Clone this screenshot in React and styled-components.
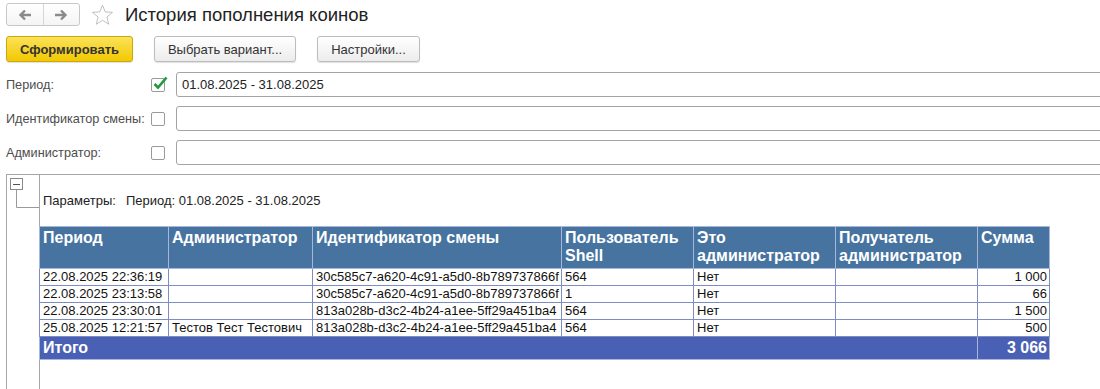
import React from "react";
import styled, { createGlobalStyle } from "styled-components";

const GlobalStyle = createGlobalStyle`
  html, body {
    margin: 0;
    padding: 0;
    background: #fff;
    overflow: hidden;
  }
  body {
    font-family: "Liberation Sans", Arial, sans-serif;
    color: #333;
  }
`;

const Page = styled.div`
  width: 1100px;
  height: 389px;
  overflow: hidden;
  padding-left: 6px;
  box-sizing: border-box;
`;

const Header = styled.div`
  display: flex;
  align-items: center;
  padding-top: 3px;
  height: 23px;
`;

const NavGroup = styled.div`
  display: flex;
  width: 74px;
  height: 23px;
  box-sizing: border-box;
  border: 1px solid #c8c8c8;
  border-radius: 3px;
  background: linear-gradient(#ffffff, #f4f4f4);
`;

const NavButton = styled.div`
  flex: 1;
  display: flex;
  align-items: center;
  justify-content: center;
  & + & {
    border-left: 1px solid #d6d6d6;
  }
`;

const StarIcon = styled.svg`
  margin-left: 11px;
`;

const Title = styled.h1`
  margin: 0 0 0 11px;
  font-size: 18.5px;
  font-weight: normal;
  color: #222;
  line-height: 23px;
`;

const Toolbar = styled.div`
  display: flex;
  gap: 21px;
  margin-top: 10px;
`;

const Button = styled.div`
  height: 26px;
  box-sizing: border-box;
  width: ${p => p.$w}px;
  display: flex;
  align-items: center;
  justify-content: center;
  border-radius: 3px;
  font-size: 13px;
  color: #333;
  border: 1px solid ${p => (p.$primary ? "#c9a80a" : "#bcbcbc")};
  background: ${p =>
    p.$primary
      ? "linear-gradient(#fbe25a, #f2c800)"
      : "linear-gradient(#ffffff, #ececec)"};
  font-weight: ${p => (p.$primary ? "bold" : "normal")};
  box-shadow: 0 1px 1px rgba(0, 0, 0, 0.12);
`;

const Form = styled.div`
  display: flex;
  flex-direction: column;
  gap: 9px;
  margin-top: 10px;
`;

const FieldRow = styled.div`
  display: flex;
  align-items: center;
  height: 25px;
  & > * {
    flex-shrink: 0;
  }
`;

const Label = styled.div`
  width: 145px;
  font-size: 12.7px;
  color: #4d4d4d;
  white-space: nowrap;
`;

const Check = styled.div`
  position: relative;
  width: 14px;
  height: 14px;
  box-sizing: border-box;
  border: 1px solid #9a9a9a;
  border-radius: 2px;
  background: #fff;
  margin-right: 11px;
  svg {
    position: absolute;
    left: 1px;
    top: -3px;
  }
`;

const Input = styled.div`
  width: 960px;
  height: 25px;
  box-sizing: border-box;
  border: 1px solid #a4a4a4;
  border-radius: 3px;
  font-size: 13px;
  color: #222;
  line-height: 23px;
  padding-left: 5px;
`;

const Sheet = styled.div`
  display: grid;
  grid-template-columns: 33px 1fr;
  margin-top: 9px;
  width: 1120px;
  height: 230px;
  border-top: 1px solid #a6a6a6;
  border-left: 1px solid #a6a6a6;
`;

const Gutter = styled.div`
  border-right: 1px solid #a6a6a6;
`;

const Content = styled.div`
  margin-left: -1px;
`;

const Params = styled.div`
  padding: 18px 0 0 4px;
  font-size: 13px;
  line-height: 16px;
  color: #222;
  span + span {
    margin-left: 10px;
  }
`;

const Table = styled.table`
  margin-top: 17px;
  border-collapse: collapse;
  table-layout: fixed;
  width: 1011px;
  font-size: 13px;
`;

const Th = styled.th`
  background: #46739f;
  color: #fff;
  font-size: 16px;
  font-weight: bold;
  line-height: 18px;
  text-align: left;
  vertical-align: top;
  padding: 2px 3px 0 3px;
  height: 39px;
  border: 1px solid #a9b6dc;
`;

const Td = styled.td`
  border: 1px solid #7d8cc4;
  padding: 0 ${p => (p.$right ? "2px" : "0")} 0 3px;
  height: 16px;
  line-height: 16px;
  color: #111;
  white-space: nowrap;
  overflow: hidden;
  text-align: ${p => (p.$right ? "right" : "left")};
`;

const TotalCell = styled.td`
  background: #4a60b5;
  color: #fff;
  font-weight: bold;
  font-size: 16px;
  height: 22px;
  line-height: 22px;
  padding: 0 2px 0 3px;
  border: 1px solid #a9b6dc;
  text-align: ${p => (p.$right ? "right" : "left")};
`;

const columns = [
  { title: "Период", w: 129 },
  { title: "Администратор", w: 144 },
  { title: "Идентификатор смены", w: 249 },
  { title: "Пользователь Shell", w: 132 },
  { title: "Это администратор", w: 142 },
  { title: "Получатель администратор", w: 142 },
  { title: "Сумма", w: 72 },
];

const rows = [
  ["22.08.2025 22:36:19", "", "30c585c7-a620-4c91-a5d0-8b789737866f", "564", "Нет", "", "1 000"],
  ["22.08.2025 23:13:58", "", "30c585c7-a620-4c91-a5d0-8b789737866f", "1", "Нет", "", "66"],
  ["22.08.2025 23:30:01", "", "813a028b-d3c2-4b24-a1ee-5ff29a451ba4", "564", "Нет", "", "1 500"],
  ["25.08.2025 12:21:57", "Тестов Тест Тестович", "813a028b-d3c2-4b24-a1ee-5ff29a451ba4", "564", "Нет", "", "500"],
];

const fields = [
  { label: "Период:", checked: true, value: "01.08.2025 - 31.08.2025" },
  { label: "Идентификатор смены:", checked: false, value: "" },
  { label: "Администратор:", checked: false, value: "" },
];

const Arrow = ({ dir }) => (
  <svg width="14" height="12" viewBox="0 0 14 12">
    <path
      d={dir === "left" ? "M13 6H3M7 1.5L2.5 6L7 10.5" : "M1 6H11M7 1.5L11.5 6L7 10.5"}
      stroke="#8a8a8a"
      strokeWidth="2.4"
      fill="none"
    />
  </svg>
);

export default function App() {
  return (
    <>
      <GlobalStyle />
      <Page>
        <Header>
          <NavGroup>
            <NavButton><Arrow dir="left" /></NavButton>
            <NavButton><Arrow dir="right" /></NavButton>
          </NavGroup>
          <StarIcon width="23" height="22" viewBox="0 0 24 23">
            <path
              d="M12 1.2L14.9 8.3L22.5 8.7L16.6 13.6L18.6 21.2L12 17L5.4 21.2L7.4 13.6L1.5 8.7L9.1 8.3Z"
              fill="none"
              stroke="#bdbdbd"
              strokeWidth="1"
              strokeLinejoin="round"
            />
          </StarIcon>
          <Title>История пополнения коинов</Title>
        </Header>

        <Toolbar>
          <Button $primary $w={127}>Сформировать</Button>
          <Button $w={142}>Выбрать вариант...</Button>
          <Button $w={103}>Настройки...</Button>
        </Toolbar>

        <Form>
          {fields.map(f => (
            <FieldRow key={f.label}>
              <Label>{f.label}</Label>
              <Check>
                {f.checked && (
                  <svg width="15" height="14" viewBox="0 0 15 14">
                    <path d="M1.5 8L5 11.5L13.5 1.5" stroke="#1f9a3e" strokeWidth="2.6" fill="none" />
                  </svg>
                )}
              </Check>
              <Input>{f.value}</Input>
            </FieldRow>
          ))}
        </Form>

        <Sheet>
          <Gutter>
            <svg width="32" height="40" viewBox="0 0 32 40">
              <path d="M9.5 15V32.5H32" stroke="#9a9a9a" strokeWidth="1" fill="none" />
              <rect x="3.5" y="3.5" width="12" height="11" fill="#fff" stroke="#8a8a8a" />
              <path d="M6 9.5H13" stroke="#555" strokeWidth="1" />
            </svg>
          </Gutter>
          <Content>
            <Params>
              <span>Параметры:</span>
              <span>Период: 01.08.2025 - 31.08.2025</span>
            </Params>
            <Table>
              <colgroup>
                {columns.map(c => (
                  <col key={c.title} style={{ width: c.w }} />
                ))}
              </colgroup>
              <thead>
                <tr>
                  {columns.map(c => (
                    <Th key={c.title}>{c.title}</Th>
                  ))}
                </tr>
              </thead>
              <tbody>
                {rows.map((r, i) => (
                  <tr key={i}>
                    {r.map((v, j) => (
                      <Td key={j} $right={j === 6}>{v}</Td>
                    ))}
                  </tr>
                ))}
                <tr>
                  <TotalCell colSpan={6}>Итого</TotalCell>
                  <TotalCell $right>3 066</TotalCell>
                </tr>
              </tbody>
            </Table>
          </Content>
        </Sheet>
      </Page>
    </>
  );
}
